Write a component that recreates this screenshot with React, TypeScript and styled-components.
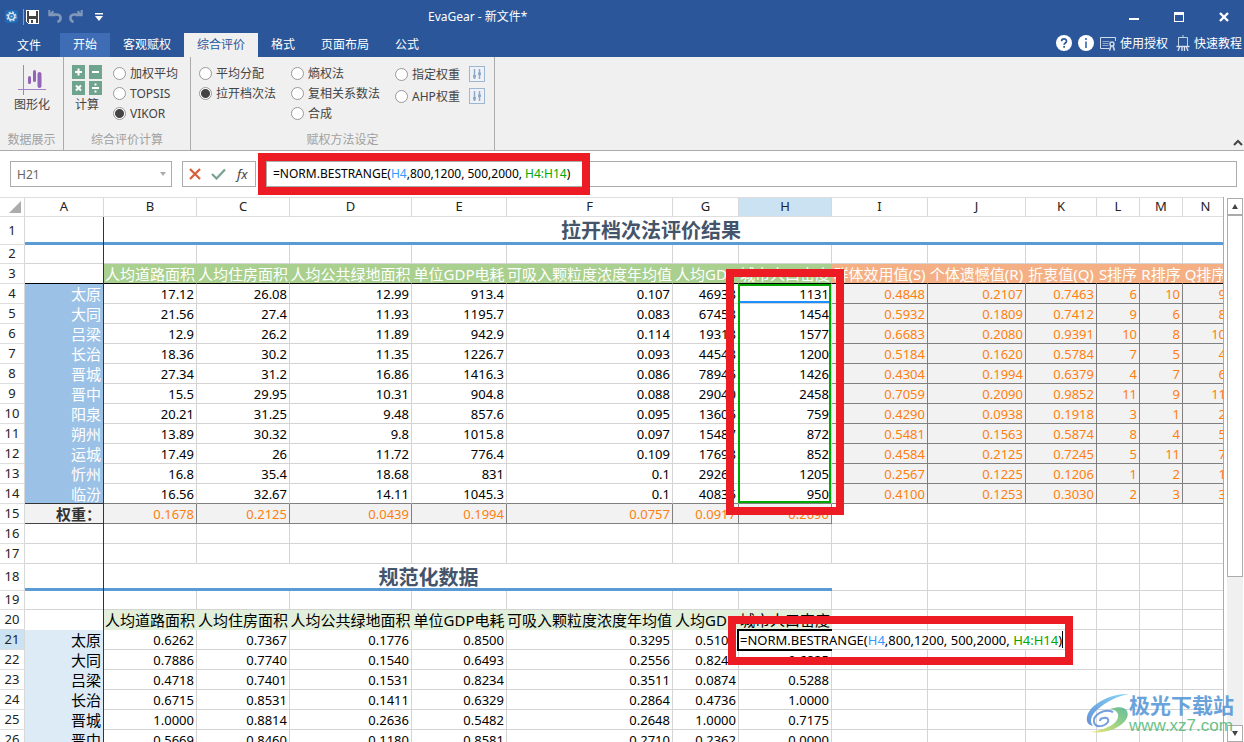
import React from 'react';
import styled, { createGlobalStyle, css } from 'styled-components';

const GlobalStyle = createGlobalStyle`
  * { box-sizing: border-box; }
  html, body, #root { height: 100%; }
  body {
    margin: 0;
    overflow: hidden;
    background: #fff;
    font-family: "Noto Sans", "Noto Sans CJK SC", sans-serif;
    font-size: 12px;
    color: #444;
  }
  button, input, label { font: inherit; color: inherit; }
  button { border: 0; background: none; padding: 0; margin: 0; }
`;

const Window = styled.div`
  position: relative;
  display: flex;
  flex-direction: column;
  height: 100vh;
  overflow: hidden;
`;

/* ---------- title bar ---------- */

const TitleArea = styled.header`
  background: #2b579a;
  color: #fff;
  flex: none;
`;

const TitleRow = styled.div`
  display: flex;
  align-items: center;
  height: 33px;
`;

const QuickAccess = styled.div`
  display: flex;
  align-items: center;
  flex: 0 0 428px;
  height: 29px;
  padding-left: 5px;
`;

const QuickButton = styled.button<{ $gap?: number }>`
  display: flex;
  margin-left: ${(p) => p.$gap ?? 0}px;
`;

const QuickDivider = styled.span`
  width: 1px;
  height: 16px;
  margin: 0 2px 0 5px;
  background: #9b9b9b;
`;

const Title = styled.h1`
  flex: 1;
  margin: 0;
  font-size: 12px;
  font-weight: 400;
  line-height: 32px;
`;

const WindowButton = styled.button`
  display: flex;
  align-items: center;
  justify-content: center;
  width: 45px;
  height: 32px;
  padding-left: 5px;
`;

const TabRow = styled.nav`
  display: flex;
  height: 24px;
`;

const Tab = styled.button<{ $state?: 'hover' | 'active' }>`
  padding: 0 13px;
  line-height: 22px;
  color: ${(p) => (p.$state === 'active' ? '#2b579a' : '#fff')};
  background: ${(p) =>
    p.$state === 'active' ? '#f0f0f0' : p.$state === 'hover' ? '#3e6db5' : 'transparent'};
`;

const FileTab = styled(Tab)`
  width: 60px;
  padding: 2px 2px 0 0;
`;

const HelpLinks = styled.div`
  display: flex;
  align-items: center;
  height: 20px;
  margin: 0 2px 0 auto;
`;

const HelpButton = styled.button<{ $gap: number }>`
  display: flex;
  align-items: center;
  gap: 4px;
  height: 20px;
  margin-left: ${(p) => p.$gap}px;
  white-space: nowrap;
`;

/* ---------- ribbon ---------- */

const Ribbon = styled.section`
  position: relative;
  display: flex;
  flex: none;
  height: 94px;
  background: #f0f0f0;
  border-bottom: 1px solid #ababab;
`;

const Group = styled.fieldset`
  display: flex;
  flex-direction: column;
  margin: 0;
  padding: 0;
  min-width: 0;
  border: 0;
  border-right: 1px solid #ababab;
`;

const GroupBody = styled.div<{ $left: number; $right: number; $gap: number }>`
  display: flex;
  gap: ${(p) => p.$gap}px;
  height: 75px;
  padding: 6px ${(p) => p.$right}px 0 ${(p) => p.$left}px;
`;

const GroupLabel = styled.div`
  line-height: 20px;
  text-align: center;
  color: #a0a0a0;
`;

const BigButton = styled.button`
  display: flex;
  flex-direction: column;
  align-items: center;
  align-self: flex-start;
  margin-top: 2px;
  line-height: 20px;
  white-space: nowrap;
`;

const RadioColumn = styled.div<{ $step?: number }>`
  display: flex;
  flex-direction: column;
  label { height: ${(p) => p.$step ?? 20}px; }
`;

const RadioLabel = styled.label`
  display: flex;
  align-items: center;
  gap: 4px;
  line-height: 18px;
  white-space: nowrap;
`;

const RadioText = styled.span`
  padding-top: 2px;
`;

const Radio = styled.input.attrs({ type: 'radio' })`
  appearance: none;
  width: 13px;
  height: 13px;
  margin: 0;
  border: 1px solid #999;
  border-radius: 50%;
  background: #fff;
  &:checked {
    background: radial-gradient(circle, #444 0 4px, #fff 5px);
  }
`;

const TuneColumn = styled.div`
  display: flex;
  flex-direction: column;
  gap: 6px;
  margin: 3px 0 0 -6px;
`;

const TuneButton = styled.button`
  display: flex;
  width: 16px;
  height: 16px;
`;

const Collapse = styled.button`
  display: flex;
  align-self: flex-end;
  margin: 0 0 4px auto;
`;

/* ---------- formula bar ---------- */

const FormulaRow = styled.div`
  position: relative;
  display: flex;
  flex: none;
  height: 46px;
  padding: 10px 7px 9px 10px;
`;

const NameBox = styled.div`
  display: flex;
  align-items: center;
  width: 162px;
  height: 26px;
  margin-right: 10px;
  padding-right: 5px;
  border: 1px solid #ababab;
`;

const NameInput = styled.input`
  flex: 1;
  min-width: 0;
  padding: 0 0 0 6px;
  border: 0;
  outline: 0;
  color: #666;
`;

const FormulaButtons = styled.div`
  display: flex;
  align-items: center;
  gap: 8px;
  width: 74px;
  height: 26px;
  margin-right: 10px;
  padding-left: 6px;
  border: 1px solid #ababab;
`;

const FxButton = styled.button`
  margin-left: 3px;
  font-style: italic;
  font-size: 13px;
  line-height: 20px;
`;

const FormulaInput = styled.div`
  flex: 1;
  height: 26px;
  padding-left: 6px;
  border: 1px solid #ababab;
  font-size: 12px;
  line-height: 24px;
  color: #000;
  white-space: nowrap;
`;

const Ref = styled.span<{ $color: string }>`
  color: ${(p) => p.$color};
`;

/* ---------- sheet ---------- */

const SheetRow = styled.div`
  position: relative;
  display: flex;
  flex: 1;
  min-height: 0;
`;

const SheetView = styled.div`
  position: relative;
  flex: 1;
  min-width: 0;
  overflow: hidden;
  border-right: 1px solid #ababab;
`;

const Table = styled.table`
  width: 1277px;
  table-layout: fixed;
  border-collapse: separate;
  border-spacing: 0;
  font-size: 13px;
  line-height: 18px;
  color: #000;
`;

const Tr = styled.tr<{ $h?: number }>`
  height: ${(p) => p.$h ?? 20}px;
`;

const Head = styled.th<{ $on?: boolean }>`
  padding: 0 0 2px;
  line-height: 16px;
  font-weight: 400;
  text-align: center;
  color: #222;
  background: ${(p) => (p.$on ? '#cbe2f2' : '#fff')};
  border-right: 1px solid #d8d8d8;
  border-bottom: 1px solid #dedede;
`;

const ColHead = styled(Head)`
  border-top: 1px solid #dedede;
`;

type Tone = 'plain' | 'blank' | 'green' | 'orange' | 'result' | 'city' | 'pale' | 'mint' | 'total' | 'low';

const tones: Record<Tone, ReturnType<typeof css>> = {
  plain: css``,
  low: css`padding-top: 2px; line-height: 17px;`,
  blank: css`border-right-color: transparent;`,
  green: css`
    background: #a9d08e; color: #fff; border-right-color: #a9d08e; border-bottom-color: #000;
    font-size: 15px; text-align: center; padding: 0;
  `,
  orange: css`
    background: #f4b084; color: #fff; border-right-color: #f4b084; border-bottom-color: #000;
    font-size: 15px; text-align: center; padding: 0;
  `,
  result: css`background: #f2f2f2; color: #ff7f0e; border-color: #808080;`,
  city: css`background: #9bc2e6; color: #fff; border-color: #9bc2e6; font-size: 15px;`,
  pale: css`background: #ddebf7; border-color: #ddebf7; font-size: 15px;`,
  mint: css`
    background: #e2efda; border-color: #e2efda;
    font-size: 15px; text-align: center; padding: 0;
  `,
  total: css`
    background: #f2f2f2; color: #333; border-color: #444; font-size: 15px; font-weight: 700;
    text-align: right;
  `,
};

const Cell = styled.td<{ $tone?: Tone; $edge?: string }>`
  padding: 0 2px 0 0;
  text-align: right;
  white-space: nowrap;
  border-right: 1px solid #d4d4d4;
  border-bottom: 1px solid #d4d4d4;
  ${(p) => tones[p.$tone ?? 'plain']}
  ${(p) => p.$edge && css`border-bottom-color: ${p.$edge};`}
`;

const TitleCell = styled.td`
  padding: 3px 0 0;
  border-bottom: 3px solid #5b9bd5;
  text-align: center;
  font-size: 20px;
  font-weight: 700;
  line-height: 20px;
  color: #44546a;
`;

const FreezeLine = styled.div`
  position: absolute;
  left: 103px;
  top: 20px;
  bottom: 0;
  width: 1px;
  background: #333;
`;

const RangeMark = styled.div`
  position: absolute;
  left: 738px;
  top: 87px;
  width: 93px;
  height: 219px;
  border: 2px solid #00a800;
`;

const ArgumentMark = styled.div`
  position: absolute;
  left: 740px;
  top: 104px;
  width: 89px;
  height: 2px;
  background: #1e90ff;
`;

const ActiveCell = styled.div`
  position: absolute;
  left: 737px;
  top: 432px;
  width: 95px;
  height: 22px;
  border: 2px solid #000;
`;

const CellEditor = styled.div`
  position: absolute;
  left: 739px;
  top: 434px;
  display: flex;
  height: 18px;
  padding-left: 1px;
  background: #fff;
  font-size: 13px;
  line-height: 19px;
  color: #000;
  white-space: nowrap;
`;

const Caret = styled.span`
  width: 1px;
  height: 17px;
  background: #000;
`;

const Highlight = styled.div<{ $x: number; $y: number; $w: number; $h: number }>`
  position: absolute;
  left: ${(p) => p.$x}px;
  top: ${(p) => p.$y}px;
  width: ${(p) => p.$w}px;
  height: ${(p) => p.$h}px;
  border: 8px solid #ed1c24;
  pointer-events: none;
`;

const ScrollBar = styled.div`
  display: flex;
  flex-direction: column;
  width: 16px;
  margin: 1px 1px 0 3px;
  background: #f0f0f0;
`;

const ScrollButton = styled.button`
  display: flex;
  flex: none;
  align-items: center;
  justify-content: center;
  height: 17px;
  background: #fff;
  border: 1px solid #ababab;
`;

const ScrollTrack = styled.div`
  flex: 1;
`;

const ScrollThumb = styled.div`
  height: 71%;
  background: #fff;
  border: 1px solid #ababab;
`;

const Watermark = styled.div`
  position: absolute;
  right: 10px;
  bottom: 6px;
  display: flex;
  align-items: center;
  opacity: 0.85;
`;

const WatermarkText = styled.div`
  display: flex;
  flex-direction: column;
`;

const WatermarkName = styled.span`
  font: 700 21px/24px "Noto Sans CJK SC", sans-serif;
  color: #4f93d6;
`;

const WatermarkUrl = styled.span`
  font: 400 17px/20px "Liberation Sans", sans-serif;
  color: #4fb872;
`;

/* ---------- icons ---------- */

const GearIcon = () => (
  <svg width="13" height="13" viewBox="0 0 13 13">
    <rect width="13" height="13" rx="2" fill="#1f6bb5" />
    <circle cx="6.5" cy="6.5" r="4.4" fill="none" stroke="#c3d6ea" strokeWidth="1.6" strokeDasharray="2 1.45" />
    <circle cx="6.5" cy="6.5" r="3.1" fill="none" stroke="#d7e4f1" strokeWidth="1.4" />
    <circle cx="6.5" cy="6.5" r="1.1" fill="#b5cce4" />
  </svg>
);

const SaveIcon = () => (
  <svg width="13" height="14" viewBox="0 0 13 14" shapeRendering="crispEdges">
    <path d="M0 0h13v14H2l-2-2z" fill="#fff" />
    <path d="M1 1h11v12H2l-1-1z" fill="#444" />
    <path d="M3 0h7v6H3zM3 9h7v4H3z" fill="#fff" />
    <path d="M5 10h2v3H5z" fill="#444" />
  </svg>
);

const UndoIcon = ({ flip }: { flip?: boolean }) => (
  <svg width="14" height="13" viewBox="0 0 14 13">
    <g transform={flip ? 'translate(14 0) scale(-1 1)' : undefined} fill="none" stroke="#8298ba" strokeWidth="2.6">
      <path d="M3 4.500H8c3.200 0 4.600 1.500 4.600 3.500S11.300 11.300 9.500 12" />
      <path d="M1.300 0v5.300h6" strokeWidth="2" />
      <path d="M1.500 5L5.500 1.200" strokeWidth="2" />
    </g>
  </svg>
);

const MoreIcon = () => (
  <svg width="8" height="8" viewBox="0 0 8 8">
    <path d="M0 0h8v1.500H0zM0 3h8L4 8z" fill="#fff" />
  </svg>
);

const LicenseIcon = () => (
  <svg width="16" height="15" viewBox="0 0 16 15" fill="none" stroke="#cfdbeb">
    <path d="M9 12.500H.5V1.500h15V5" />
    <path d="M2.500 5.500h7M2.500 7.500h6M2.500 9.500h6" strokeOpacity=".6" />
    <circle cx="12" cy="8" r="2" strokeWidth="1.4" />
    <path d="M11 10l-1.500 4.500M13 10l1.500 4.500" strokeWidth="1.6" />
  </svg>
);

const EaselIcon = () => (
  <svg width="14" height="16" viewBox="0 0 14 16" fill="none" stroke="#dbe4f0">
    <path d="M7 0v2.500M2.500 11V2.500h9V11" strokeOpacity=".85" />
    <path d="M.5 11.500h13" strokeWidth="1.4" />
    <path d="M3.500 12L2 16M6 12v4M8.500 12v4M10.500 12l1.500 4" strokeWidth="1.3" />
  </svg>
);

const ChartIcon = () => (
  <svg width="28" height="30" viewBox="0 0 28 30" fill="none">
    <path d="M5.500 0v30M0 24.500h28" stroke="#a77fc6" />
    <path d="M11.500 12.500v5" stroke="#9364b8" strokeWidth="3" strokeLinecap="round" />
    <path d="M16.500 6.500v9" stroke="#9364b8" strokeWidth="3" strokeLinecap="round" />
    <path d="M21.500 9v12" stroke="#9364b8" strokeWidth="4" strokeLinecap="round" />
  </svg>
);

const CalcIcon = () => (
  <svg width="30" height="30" viewBox="0 0 30 30">
    <path d="M0 0h13v14H0zM17 0h13v14H17zM0 16h13v14H0zM17 16h13v14H17z" fill="#6fa58f" />
    <g stroke="#fff" strokeWidth="2" fill="none">
      <path d="M3 7h7M6.500 3.500v7M20 7h7M4 20.500l5 5M9 20.500l-5 5M20 23h7" />
      <path d="M23.500 18.500v2M23.500 25.500v2" />
    </g>
  </svg>
);

const TuneIcon = () => (
  <svg width="16" height="16" viewBox="0 0 16 16">
    <rect x=".5" y=".5" width="15" height="15" fill="#eef2f7" stroke="#9db7d3" />
    <path d="M5.500 3v10M10.500 3v10" stroke="#8fa9c6" strokeWidth="1.500" />
    <path d="M4 9h3v2l-1.500 2L4 11zM9 6.500h3V9H9z" fill="#8fa9c6" />
  </svg>
);

const Logo = () => (
  <svg width="43" height="42" viewBox="0 0 43 42">
    <defs>
      <linearGradient id="sky" x1="0" y1="1" x2="1" y2="0">
        <stop offset="0" stopColor="#4a7fd0" />
        <stop offset="1" stopColor="#6fd0f5" />
      </linearGradient>
      <linearGradient id="leaf" x1="0" y1="1" x2="1" y2="0">
        <stop offset="0" stopColor="#e8e65a" />
        <stop offset=".6" stopColor="#7cc576" />
        <stop offset="1" stopColor="#4db390" />
      </linearGradient>
    </defs>
    <path d="M43 1C24 0 3 12 1 24c-1 6 2 8 6 9-4-5-2-11 5-17C20 9 31 3 43 1z" fill="url(#sky)" />
    <path d="M24 16c9-3 15-2 17 2 3 7-4 14-13 18-8 3-16 4-23 3 12-2 22-6 26-12 3-6 0-10-7-11z" fill="url(#leaf)" />
    <path d="M27 19c-9-4-20 3-19 10 1 6 10 5 14 0 1-3-1-5-4-4-2 0-4 1-4 3" fill="none" stroke="#5b8fd8" strokeWidth="2" />
  </svg>
);

/* ---------- data ---------- */

const columns = [
  ['A', 79], ['B', 93], ['C', 93], ['D', 122], ['E', 95], ['F', 166], ['G', 66], ['H', 93],
  ['I', 96], ['J', 98], ['K', 71], ['L', 43], ['M', 43], ['N', 46], ['', 48],
] as const;

const indicators = [
  '人均道路面积', '人均住房面积', '人均公共绿地面积', '单位GDP电耗', '可吸入颗粒度浓度年均值', '人均GDP', '城市人口密度',
];
const resultHeads = ['群体效用值(S)', '个体遗憾值(R)', '折衷值(Q)', 'S排序', 'R排序', 'Q排序'];

const cities: [string, string, string][] = [
  ['太原', '17.12 26.08 12.99 913.4 0.107 46938 1131', '0.4848 0.2107 0.7463 6 10 9'],
  ['大同', '21.56 27.4 11.93 1195.7 0.083 67458 1454', '0.5932 0.1809 0.7412 9 6 8'],
  ['吕梁', '12.9 26.2 11.89 942.9 0.114 19318 1577', '0.6683 0.2080 0.9391 10 8 10'],
  ['长治', '18.36 30.2 11.35 1226.7 0.093 44548 1200', '0.5184 0.1620 0.5784 7 5 4'],
  ['晋城', '27.34 31.2 16.86 1416.3 0.086 78946 1426', '0.4304 0.1994 0.6379 4 7 6'],
  ['晋中', '15.5 29.95 10.31 904.8 0.088 29040 2458', '0.7059 0.2090 0.9852 11 9 11'],
  ['阳泉', '20.21 31.25 9.48 857.6 0.095 13606 759', '0.4290 0.0938 0.1918 3 1 2'],
  ['朔州', '13.89 30.32 9.8 1015.8 0.097 15487 872', '0.5481 0.1563 0.5874 8 4 5'],
  ['运城', '17.49 26 11.72 776.4 0.109 17698 852', '0.4584 0.2125 0.7245 5 11 7'],
  ['忻州', '16.8 35.4 18.68 831 0.1 29261 1205', '0.2567 0.1225 0.1206 1 2 1'],
  ['临汾', '16.56 32.67 14.11 1045.3 0.1 40836 950', '0.4100 0.1253 0.3030 2 3 3'],
];

const weights = '0.1678 0.2125 0.0439 0.1994 0.0757 0.0917 0.2090'.split(' ');

const normalized: [string, string][] = [
  ['太原', '0.6262 0.7367 0.1776 0.8500 0.3295 0.5101 _'],
  ['大同', '0.7886 0.7740 0.1540 0.6493 0.2556 0.8242 0.6825'],
  ['吕梁', '0.4718 0.7401 0.1531 0.8234 0.3511 0.0874 0.5288'],
  ['长治', '0.6715 0.8531 0.1411 0.6329 0.2864 0.4736 1.0000'],
  ['晋城', '1.0000 0.8814 0.2636 0.5482 0.2648 1.0000 0.7175'],
  ['晋中', '0.5669 0.8460 0.1180 0.8581 0.2710 0.2362 0.0000'],
];

const Empty = ({ count }: { count: number }) => (
  <>
    {Array.from({ length: count }, (_, i) => (
      <Cell key={i} />
    ))}
  </>
);

const EmptyRow = ({ n, h }: { n: number; h?: number }) => (
  <Tr $h={h}>
    <Head scope="row">{n}</Head>
    <Cell $tone="blank" />
    <Empty count={14} />
  </Tr>
);

const Formula = () => (
  <span>
    =NORM.BESTRANGE(<Ref $color="#3399ff">H4</Ref>,800,1200, 500,2000, <Ref $color="#00a800">H4:H14</Ref>)
  </span>
);

const Sheet = () => (
  <Table>
    <colgroup>
      <col style={{ width: 25 }} />
      {columns.map(([name, width]) => (
        <col key={name} style={{ width }} />
      ))}
    </colgroup>
    <thead>
      <Tr>
        <ColHead aria-label="全选">
          <svg width="12" height="12" viewBox="0 0 12 12" style={{ display: 'block', margin: '2px 0 0 9px' }}>
            <path d="M12 0v12H0z" fill="#ababab" />
          </svg>
        </ColHead>
        {columns.map(([name]) => (
          <ColHead key={name} scope="col" $on={name === 'H'}>{name}</ColHead>
        ))}
      </Tr>
    </thead>
    <tbody>
      <Tr $h={28}>
        <Head scope="row">1</Head>
        <TitleCell colSpan={15}>拉开档次法评价结果</TitleCell>
      </Tr>
      <EmptyRow n={2} h={19} />
      <Tr>
        <Head scope="row">3</Head>
        <Cell $tone="blank" $edge="#000" />
        {indicators.map((t) => <Cell key={t} $tone="green">{t}</Cell>)}
        {resultHeads.map((t) => <Cell key={t} $tone="orange">{t}</Cell>)}
        <Cell $tone="orange" />
      </Tr>
      {cities.map(([city, values, results], i) => {
        const last = i === cities.length - 1;
        return (
          <Tr key={city}>
            <Head scope="row">{i + 4}</Head>
            <Cell $tone="city" $edge={last ? '#333' : undefined}>{city}</Cell>
            {values.split(' ').map((v, k) => (
              <Cell key={k} $edge={last ? '#808080' : undefined}>{v}</Cell>
            ))}
            {results.split(' ').map((v, k) => <Cell key={k} $tone="result">{v}</Cell>)}
            <Cell $tone="result" />
          </Tr>
        );
      })}
      <Tr>
        <Head scope="row">15</Head>
        <Cell $tone="total">权重：</Cell>
        {weights.map((v, k) => <Cell key={k} $tone="result">{v}</Cell>)}
        <Empty count={7} />
      </Tr>
      <EmptyRow n={16} />
      <EmptyRow n={17} />
      <Tr $h={27}>
        <Head scope="row">18</Head>
        <TitleCell colSpan={8}>规范化数据</TitleCell>
        <Empty count={7} />
      </Tr>
      <EmptyRow n={19} h={19} />
      <Tr>
        <Head scope="row">20</Head>
        <Cell $tone="blank" $edge="#fff" />
        {indicators.map((t) => <Cell key={t} $tone="mint">{t}</Cell>)}
        <Empty count={7} />
      </Tr>
      {normalized.map(([city, values], i) => (
        <Tr key={city}>
          <Head scope="row" $on={i === 0}>{i + 21}</Head>
          <Cell $tone="pale">{city}</Cell>
          {values.split(' ').map((v, k) => <Cell key={k} $tone="low">{v === '_' ? '' : v}</Cell>)}
          <Empty count={7} />
        </Tr>
      ))}
    </tbody>
  </Table>
);

const RadioOption = ({ group, label, on }: { group: string; label: string; on?: boolean }) => (
  <RadioLabel>
    <Radio name={group} defaultChecked={on} />
    <RadioText>{label}</RadioText>
  </RadioLabel>
);

export default function App() {
  return (
    <Window>
      <GlobalStyle />
      <TitleArea>
        <TitleRow>
          <QuickAccess>
            <GearIcon />
            <QuickDivider />
            <QuickButton aria-label="保存"><SaveIcon /></QuickButton>
            <QuickButton aria-label="撤销" $gap={9}><UndoIcon /></QuickButton>
            <QuickButton aria-label="重做" $gap={7}><UndoIcon flip /></QuickButton>
            <QuickButton aria-label="更多" $gap={12}><MoreIcon /></QuickButton>
          </QuickAccess>
          <Title>EvaGear - 新文件*</Title>
          <WindowButton aria-label="最小化">
            <svg width="10" height="10"><path d="M0 6h10v2H0z" fill="#fff" /></svg>
          </WindowButton>
          <WindowButton aria-label="最大化">
            <svg width="10" height="10"><path d="M0 0h10v10H0zM1 3v6h8V3z" fill="#fff" fillRule="evenodd" /></svg>
          </WindowButton>
          <WindowButton aria-label="关闭">
            <svg width="10" height="10"><path d="M1 1l8 8M9 1L1 9" stroke="#fff" strokeWidth="2.4" /></svg>
          </WindowButton>
        </TitleRow>
        <TabRow>
          <FileTab>文件</FileTab>
          <Tab $state="hover">开始</Tab>
          <Tab>客观赋权</Tab>
          <Tab $state="active">综合评价</Tab>
          <Tab>格式</Tab>
          <Tab>页面布局</Tab>
          <Tab>公式</Tab>
          <HelpLinks>
            <HelpButton $gap={0} aria-label="帮助">
              <svg width="16" height="16" viewBox="0 0 16 16">
                <circle cx="8" cy="8" r="8" fill="#fff" />
                <path d="M5.600 6.200c0-3 4.900-3 4.900 0 0 1.800-2.400 1.700-2.400 3.600M8.100 11v1.800" fill="none" stroke="#2b579a" strokeWidth="1.700" />
              </svg>
            </HelpButton>
            <HelpButton $gap={6} aria-label="关于">
              <svg width="16" height="16" viewBox="0 0 16 16">
                <circle cx="8" cy="8" r="8" fill="#fff" />
                <path d="M8 3v2M8 6.500V13" stroke="#5a86c0" strokeWidth="2" />
              </svg>
            </HelpButton>
            <HelpButton $gap={6}><LicenseIcon />使用授权</HelpButton>
            <HelpButton $gap={8}><EaselIcon />快速教程</HelpButton>
          </HelpLinks>
        </TabRow>
      </TitleArea>

      <Ribbon>
        <Group aria-label="数据展示">
          <GroupBody $left={14} $right={13} $gap={0}>
            <BigButton><ChartIcon />图形化</BigButton>
          </GroupBody>
          <GroupLabel>数据展示</GroupLabel>
        </Group>
        <Group aria-label="综合评价计算">
          <GroupBody $left={8} $right={12} $gap={11}>
            <BigButton><CalcIcon />计算</BigButton>
            <RadioColumn>
              <RadioOption group="method" label="加权平均" />
              <RadioOption group="method" label="TOPSIS" />
              <RadioOption group="method" label="VIKOR" on />
            </RadioColumn>
          </GroupBody>
          <GroupLabel>综合评价计算</GroupLabel>
        </Group>
        <Group aria-label="赋权方法设定">
          <GroupBody $left={8} $right={9} $gap={15}>
            <RadioColumn>
              <RadioOption group="weight" label="平均分配" />
              <RadioOption group="weight" label="拉开档次法" on />
            </RadioColumn>
            <RadioColumn>
              <RadioOption group="weight" label="熵权法" />
              <RadioOption group="weight" label="复相关系数法" />
              <RadioOption group="weight" label="合成" />
            </RadioColumn>
            <RadioColumn $step={22}>
              <RadioOption group="weight" label="指定权重" />
              <RadioOption group="weight" label="AHP权重" />
            </RadioColumn>
            <TuneColumn>
              <TuneButton aria-label="设置指定权重"><TuneIcon /></TuneButton>
              <TuneButton aria-label="设置AHP权重"><TuneIcon /></TuneButton>
            </TuneColumn>
          </GroupBody>
          <GroupLabel>赋权方法设定</GroupLabel>
        </Group>
        <Collapse aria-label="折叠功能区">
          <svg width="12" height="8"><path d="M2 7l4-4 4 4" fill="none" stroke="#444" strokeWidth="2" /></svg>
        </Collapse>
      </Ribbon>

      <FormulaRow>
        <NameBox>
          <NameInput aria-label="名称框" defaultValue="H21" />
          <button aria-label="展开名称列表">
            <svg width="6" height="4" style={{ display: 'block' }}><path d="M0 0h6L3 4z" fill="#ababab" /></svg>
          </button>
        </NameBox>
        <FormulaButtons>
          <QuickButton aria-label="取消">
            <svg width="12" height="12"><path d="M1 1l10 10M11 1L1 11" stroke="#d9603f" strokeWidth="2.300" /></svg>
          </QuickButton>
          <QuickButton aria-label="确认" $gap={2}>
            <svg width="15" height="12"><path d="M1 6l4.500 4.500L14 1.500" fill="none" stroke="#7ba393" strokeWidth="2.300" /></svg>
          </QuickButton>
          <FxButton>fx</FxButton>
        </FormulaButtons>
        <FormulaInput role="textbox" aria-label="公式" tabIndex={0}><Formula /></FormulaInput>
        <Highlight $x={258} $y={2} $w={332} $h={42} />
      </FormulaRow>

      <SheetRow>
        <SheetView>
          <Sheet />
          <FreezeLine />
          <RangeMark />
          <ArgumentMark />
          <ActiveCell />
          <CellEditor><Formula /><Caret /></CellEditor>
          <Highlight $x={726} $y={72} $w={118} $h={246} />
          <Highlight $x={728} $y={419} $w={345} $h={49} />
        </SheetView>
        <ScrollBar>
          <ScrollButton aria-label="向上滚动">
            <svg width="6" height="5"><path d="M0 5h6L3 0z" fill="#444" /></svg>
          </ScrollButton>
          <ScrollTrack><ScrollThumb /></ScrollTrack>
          <ScrollButton aria-label="向下滚动">
            <svg width="6" height="5"><path d="M0 0h6L3 5z" fill="#444" /></svg>
          </ScrollButton>
        </ScrollBar>
      </SheetRow>

      <Watermark>
        <Logo />
        <WatermarkText>
          <WatermarkName>极光下载站</WatermarkName>
          <WatermarkUrl>www.xz7.com</WatermarkUrl>
        </WatermarkText>
      </Watermark>
    </Window>
  );
}
